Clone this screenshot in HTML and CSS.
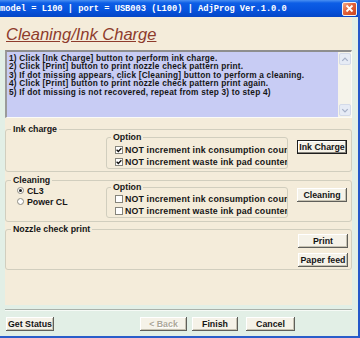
FILE: index.html
```html
<!DOCTYPE html>
<html lang="en">
<head>
<meta charset="UTF-8">
<title>AdjProg</title>
<link rel="stylesheet" href="styles.css">
</head>
<body>
<div class="window">
  <div class="titlebar">
    <span class="caption">model = L100 | port = USB003 (L100) | AdjProg Ver.1.0.0</span>
    <span class="close">
      <svg width="9" height="9" viewBox="0 0 9 9"><path d="M1.5 1.5 L7.5 7.5 M7.5 1.5 L1.5 7.5" stroke="#fff" stroke-width="1.8" fill="none"/></svg>
    </span>
  </div>

  <div class="header"><h1>Cleaning/Ink Charge</h1></div>

  <div class="page">
    <div class="notes">
      <div class="notes-text">
        <div>1) Click [Ink Charge] button to perform ink charge.</div>
        <div>2) Click [Print] button to print nozzle check pattern print.</div>
        <div>3) If dot missing appears, click [Cleaning] button to perform a cleaning.</div>
        <div>4) Click [Print] button to print nozzle check pattern print again.</div>
        <div>5) If dot missing is not recovered, repeat from step 3) to step 4)</div>
      </div>
      <div class="scrollbar">
        <span class="arrow"><svg width="11" height="11" viewBox="0 0 11 11"><path d="M2.5 7 L5.5 4 L8.5 7" stroke="#a7b1c8" stroke-width="1.4" fill="none"/></svg></span>
        <span class="arrow"><svg width="11" height="11" viewBox="0 0 11 11"><path d="M2.5 4 L5.5 7 L8.5 4" stroke="#a7b1c8" stroke-width="1.4" fill="none"/></svg></span>
      </div>
    </div>

    <!-- ink charge -->
    <fieldset class="group group-ink">
      <legend>Ink charge</legend>
      <div class="group-row">
        <div class="group-left"></div>
        <fieldset class="option option-ink">
          <legend>Option</legend>
          <div class="check"><span class="box"><svg width="6" height="6" viewBox="0 0 6 6"><path d="M0.6 2.8 L2.3 4.5 L5.4 1.2" stroke="#111" stroke-width="1.3" fill="none"/></svg></span><span class="check-text">NOT increment ink consumption counter</span></div>
          <div class="check"><span class="box"><svg width="6" height="6" viewBox="0 0 6 6"><path d="M0.6 2.8 L2.3 4.5 L5.4 1.2" stroke="#111" stroke-width="1.3" fill="none"/></svg></span><span class="check-text">NOT increment waste ink pad counter</span></div>
        </fieldset>
        <div class="actions actions-ink">
          <button class="btn btn-default">Ink Charge</button>
        </div>
      </div>
    </fieldset>

    <!-- cleaning -->
    <fieldset class="group group-clean">
      <legend>Cleaning</legend>
      <div class="group-row">
        <div class="group-left radios">
          <div class="radio-row"><span class="radio on"></span>CL3</div>
          <div class="radio-row"><span class="radio"></span>Power CL</div>
        </div>
        <fieldset class="option option-clean">
          <legend>Option</legend>
          <div class="check"><span class="box"></span><span class="check-text">NOT increment ink consumption counter</span></div>
          <div class="check"><span class="box"></span><span class="check-text">NOT increment waste ink pad counter</span></div>
        </fieldset>
        <div class="actions actions-clean">
          <button class="btn">Cleaning</button>
        </div>
      </div>
    </fieldset>

    <!-- nozzle check -->
    <fieldset class="group group-nozzle">
      <legend>Nozzle check print</legend>
      <div class="nozzle-actions">
        <button class="btn">Print</button>
        <button class="btn">Paper feed</button>
      </div>
    </fieldset>
  </div>

  <div class="footer">
    <div class="footer-line"></div>
    <div class="footer-buttons">
      <button class="btn btn-status">Get Status</button>
      <button class="btn btn-back" disabled>&lt; Back</button>
      <button class="btn btn-finish">Finish</button>
      <button class="btn btn-cancel">Cancel</button>
    </div>
  </div>
</div>
</body>
</html>
```
FILE: styles.css
```css
* {
  box-sizing: border-box;
}

body {
  margin: 0;
  font: bold 8.8px "Liberation Sans", Arial, sans-serif;
  color: #161616;
}

.window {
  width: 360px;
  height: 338px;
  background: #e2efe6;
  border-right: 2px solid #2357c9;
  border-bottom: 2px solid #2a5dca;
  display: flex;
  flex-direction: column;
  overflow: hidden;
}

/* title bar */
.titlebar {
  height: 17px;
  flex: none;
  display: flex;
  align-items: center;
  justify-content: space-between;
  padding-right: 1px;
  background: linear-gradient(#4a90f2, #0d5ee6 3px, #0753dd 60%, #0546c6);
  color: #fff;
}
.caption {
  font: bold 8.7px "Liberation Mono", monospace;
  white-space: nowrap;
}
.close {
  width: 15px;
  height: 14px;
  border: 1px solid #f4f4f4;
  border-radius: 2px;
  background: linear-gradient(135deg, #f3a98a, #e2613a 45%, #c9441f);
  display: flex;
  align-items: center;
  justify-content: center;
}

/* header */
.header {
  height: 33px;
  flex: none;
  margin-right: 6px;
  padding: 8px 0 0 6px;
  background: #f4ecda;
}
.header h1 {
  margin: 0;
  font: italic normal 16.5px "Liberation Sans", Arial, sans-serif;
  line-height: 18px;
  color: #8e3b2c;
  text-decoration: underline;
}

/* page body */
.page {
  height: 255px;
  flex: none;
  margin: 0 6px 0 5px;
  background: #f4ecda;
}

.notes {
  height: 68px;
  display: flex;
  background: #c8ccf4;
  border-top: 2px solid #8e8e8e;
  border-left: 2px solid #9a9a9a;
  border-right: 1px solid #fbfbf6;
  border-bottom: 1px solid #fbfbf6;
}
.notes-text {
  flex: 1;
  padding: 2px 0 0 2px;
  font-size: 8.3px;
  letter-spacing: 0.2px;
  line-height: 8.4px;
  white-space: nowrap;
  overflow: hidden;
}
.scrollbar {
  width: 13px;
  background: #f5f3ea;
  display: flex;
  flex-direction: column;
  justify-content: space-between;
  padding: 1px 0 1px 1px;
}
.arrow {
  height: 12px;
  background: #e6ebf5;
  border: 1px solid #d3dae9;
  border-radius: 2px;
  display: flex;
  align-items: center;
  justify-content: center;
}

/* group boxes */
fieldset {
  margin: 0;
  padding: 0;
  min-width: 0;
  border: 1px solid #d1cebe;
  border-radius: 3px;
}
legend {
  padding: 0 2px;
  margin-left: 5px;
  line-height: 9px;
}

.group-ink {
  margin-top: 7px;
  padding-bottom: 2px;
}
.group-clean {
  margin-top: 4px;
  padding-bottom: 3px;
}
.group-nozzle {
  margin-top: 3px;
  padding-bottom: 2px;
}

.group-row {
  display: flex;
  align-items: flex-start;
}
.group-left {
  width: 100px;
  flex: none;
}

.option {
  width: 182px;
  flex: none;
}
.option legend {
  margin-left: 4px;
}
.option-ink {
  margin-top: -1px;
  padding-top: 2px;
}
.option-clean {
  margin-top: -2px;
  padding-top: 1px;
}

.check {
  height: 12px;
  display: flex;
  align-items: center;
  padding-left: 8px;
  white-space: nowrap;
  overflow: hidden;
}
.check-text {
  letter-spacing: 0.15px;
}
.box {
  width: 8px;
  height: 8px;
  flex: none;
  margin-right: 2px;
  background: #fff;
  border: 1px solid #85847b;
  display: flex;
  align-items: center;
  justify-content: center;
}

.radios {
  padding-left: 11px;
}
.radio-row {
  height: 11px;
  display: flex;
  align-items: center;
}
.radio {
  width: 7px;
  height: 7px;
  margin-right: 3px;
  border-radius: 50%;
  background: #fff;
  border: 1px solid #8d8c83;
  display: flex;
  align-items: center;
  justify-content: center;
}
.radio.on:after {
  content: '';
  width: 3px;
  height: 3px;
  border-radius: 50%;
  background: #222;
}

.actions {
  margin-left: 9px;
}
.actions-ink {
  padding-top: 6px;
}
.actions-clean {
  padding-top: 3px;
}

.nozzle-actions {
  display: flex;
  flex-direction: column;
  align-items: flex-end;
  gap: 5px;
  padding-right: 3px;
}

/* buttons */
.btn {
  width: 50px;
  height: 14px;
  padding: 0;
  border: none;
  border-radius: 0;
  font: inherit;
  color: #141414;
  line-height: 14px;
  white-space: nowrap;
  background: #f5f2e8;
  box-shadow: inset -1px -1px #5f5f5a, inset 1px 1px #fff, inset -2px -2px #c6c2b2;
}
.btn-default {
  box-shadow: inset 0 0 0 1px #1e1e1e, inset -2px -2px #86847c, inset 2px 2px #fff;
}

/* footer */
.footer {
  flex: 1;
  margin: 0 6px 0 5px;
}
.footer-line {
  margin-top: 4px;
  height: 2px;
  border-top: 1px solid #a9b1aa;
  border-bottom: 1px solid #f6faf6;
}
.footer-buttons {
  display: flex;
  margin-top: 6px;
}
.btn-status {
  width: 48px;
  margin-left: 1px;
}
.btn-back {
  width: 47px;
  margin-left: 86px;
  color: #aca899;
  text-shadow: 1px 1px #fff;
}
.btn-finish {
  width: 46px;
  margin-left: 5px;
}
.btn-cancel {
  width: 49px;
  margin-left: 8px;
}
```
